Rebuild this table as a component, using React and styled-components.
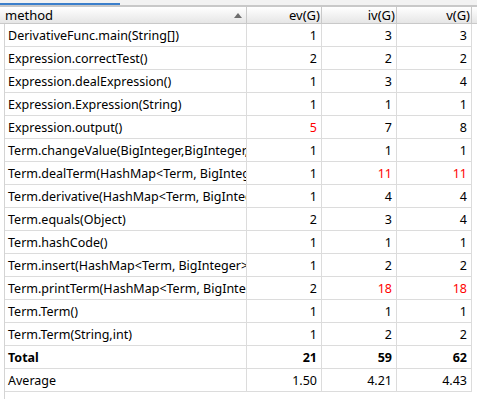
import styled, { createGlobalStyle } from 'styled-components';

const GlobalStyle = createGlobalStyle`
  *, *::before, *::after {
    box-sizing: border-box;
  }
  html, body {
    margin: 0;
    padding: 0;
    background: #ffffff;
  }
  body {
    font-family: "Noto Sans", "Liberation Sans", sans-serif;
    font-size: 12.5px;
    color: #000000;
  }
`;

const Frame = styled.div`
  width: 477px;
  height: 399px;
  display: flex;
  flex-direction: column;
  overflow: hidden;
  background: #ffffff;
`;

const TopStrip = styled.div`
  height: 7px;
  display: flex;
  flex-direction: column;
  background: #f2f2f2;
`;

const Progress = styled.div`
  margin-top: 3px;
  height: 2px;
  width: 120px;
  background: #3b7fcb;
`;

const TopLine = styled.div`
  height: 2px;
  background: #c8c8c8;
`;

const Header = styled.div`
  height: 17px;
  display: flex;
  padding-left: 4px;
  border-bottom: 1px solid #c9c9c9;
  background: linear-gradient(#ffffff, #f1f1f1 55%, #e6e6e6);
`;

const HeadCell = styled.div`
  width: ${(p) => p.$w}px;
  display: flex;
  align-items: center;
  justify-content: ${(p) => (p.$num ? 'flex-end' : 'space-between')};
  padding: 0 1px;
  border-right: 1px solid #c9c9c9;
  font-size: 13px;
  line-height: 16px;
`;

const SortArrow = styled.span`
  width: 0;
  height: 0;
  margin-right: 3px;
  border-left: 4px solid transparent;
  border-right: 4px solid transparent;
  border-bottom: 5px solid #6e6e6e;
`;

const Body = styled.div`
  flex: 1;
  margin-left: 4px;
  border-left: 1px solid #d4d4d4;
`;

const Row = styled.div`
  display: grid;
  grid-template-columns: 242px 75px 75px 75px;
  height: 23px;
`;

const Cell = styled.div`
  display: flex;
  align-items: center;
  justify-content: ${(p) => (p.$num ? 'flex-end' : 'flex-start')};
  padding: ${(p) => (p.$num ? '0 4px 0 0' : '0 0 0 3px')};
  border-right: 1px solid #dcdcdc;
  border-bottom: 1px solid #dcdcdc;
  white-space: nowrap;
  overflow: hidden;
  color: ${(p) => (p.$hot ? '#ff0000' : '#000000')};
  font-weight: ${(p) => (p.$bold ? 700 : 400)};
`;

const rows = [
  ['DerivativeFunc.main(String[])', 1, 3, 3],
  ['Expression.correctTest()', 2, 2, 2],
  ['Expression.dealExpression()', 1, 3, 4],
  ['Expression.Expression(String)', 1, 1, 1],
  ['Expression.output()', 5, 7, 8],
  ['Term.changeValue(BigInteger,BigInteger,BigInteger)', 1, 1, 1],
  ['Term.dealTerm(HashMap<Term, BigInteger>)', 1, 11, 11],
  ['Term.derivative(HashMap<Term, BigInteger>)', 1, 4, 4],
  ['Term.equals(Object)', 2, 3, 4],
  ['Term.hashCode()', 1, 1, 1],
  ['Term.insert(HashMap<Term, BigInteger>)', 1, 2, 2],
  ['Term.printTerm(HashMap<Term, BigInteger>)', 2, 18, 18],
  ['Term.Term()', 1, 1, 1],
  ['Term.Term(String,int)', 1, 2, 2],
];

// thresholds used by the metrics view: ev > 3, iv/v > 10 are flagged
const isHot = (i, v) => (i === 0 ? v > 3 : v > 10);

export default function App() {
  return (
    <>
      <GlobalStyle />
      <Frame>
        <TopStrip>
          <Progress />
          <TopLine />
        </TopStrip>
        <Header>
          <HeadCell $w={243}>
            method
            <SortArrow />
          </HeadCell>
          <HeadCell $w={75} $num>ev(G)</HeadCell>
          <HeadCell $w={75} $num>iv(G)</HeadCell>
          <HeadCell $w={75} $num>v(G)</HeadCell>
        </Header>
        <Body>
          {rows.map(([name, ...vals]) => (
            <Row key={name}>
              <Cell>{name}</Cell>
              {vals.map((v, i) => (
                <Cell key={i} $num $hot={isHot(i, v)}>
                  {v}
                </Cell>
              ))}
            </Row>
          ))}
          <Row>
            <Cell $bold>Total</Cell>
            <Cell $num $bold>21</Cell>
            <Cell $num $bold>59</Cell>
            <Cell $num $bold>62</Cell>
          </Row>
          <Row>
            <Cell>Average</Cell>
            <Cell $num>1.50</Cell>
            <Cell $num>4.21</Cell>
            <Cell $num>4.43</Cell>
          </Row>
        </Body>
      </Frame>
    </>
  );
}
